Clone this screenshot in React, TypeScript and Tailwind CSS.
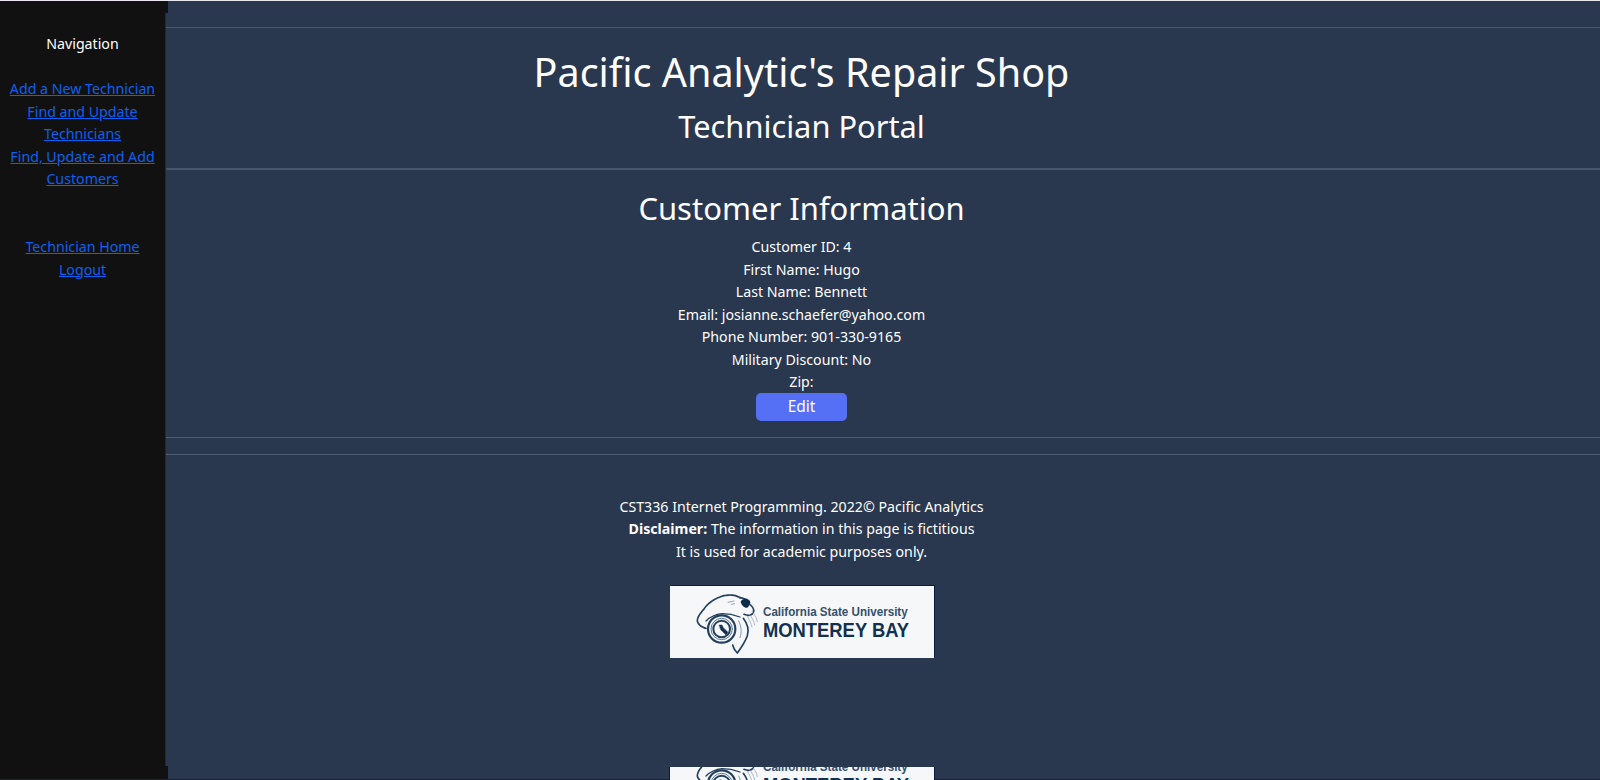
const customerRows = [
  "Customer ID: 4",
  "First Name: Hugo",
  "Last Name: Bennett",
  "Email: josianne.schaefer@yahoo.com",
  "Phone Number: 901-330-9165",
  "Military Discount: No",
  "Zip:",
];

function NavLink({ children }: { children: React.ReactNode }) {
  return (
    <a href="#" className="text-[#0d60f0] underline">
      {children}
    </a>
  );
}

function Otter() {
  return (
    <svg width="70" height="70" viewBox="0 0 210 210" fill="none" className="mt-[3px] shrink-0">
      <g stroke="#23405f" strokeLinecap="round" strokeLinejoin="round">
        {/* head and back */}
        <path
          d="M48 118C34 114 24 106 22 96C22 82 34 70 42 60C52 44 72 30 92 23C112 16 134 16 150 26"
          strokeWidth="5"
          strokeDasharray="9 2"
        />
        <path d="M150 26C158 28 164 30 170 32M182 48C190 56 194 66 188 74C182 80 172 80 162 76" strokeWidth="5" />
        <path d="M48 96C60 84 76 76 96 74C116 74 134 78 150 84" strokeWidth="4" />
        {/* flipper */}
        <path
          d="M160 88C172 104 178 122 172 140C166 158 152 178 142 192C136 186 130 176 128 168"
          strokeWidth="5"
        />
        <path d="M146 96C154 112 156 130 150 146" strokeWidth="2.5" stroke="#6f84a0" />
        {/* seal ring */}
        <circle cx="95" cy="120" r="41" strokeWidth="6.5" />
        <circle cx="95" cy="120" r="32" strokeWidth="3" stroke="#5e7690" />
        <circle cx="95" cy="120" r="25" strokeWidth="6" />
        <path d="M88 108L96 108L100 116L114 130L108 138L92 122Z" fill="#12304f" strokeWidth="1.5" />
        {/* eye and whiskers */}
        <path d="M114 40L132 36M124 46L134 44" strokeWidth="2.5" stroke="#7f93aa" />
        <path
          d="M186 68C194 76 200 86 202 98M178 76C186 86 192 96 194 108M172 82C178 92 184 102 186 114"
          stroke="#9fb0c0"
          strokeWidth="2.5"
        />
      </g>
      <path d="M152 38C156 28 172 26 178 34C184 42 180 50 172 56C164 58 154 48 152 38Z" fill="#0f2b4a" />
    </svg>
  );
}

function Logo() {
  return (
    <div className="flex h-[72px] w-[264px] items-center bg-[#f6f7f8] pl-[20px] shadow-[1px_-1px_0_#0b1846]">
      <Otter />
      <div className="ml-[3px] flex w-[145px] flex-col font-['Liberation_Sans',sans-serif] font-bold">
        <span className="origin-left scale-x-[0.93] text-[12.5px] leading-[15px] whitespace-nowrap text-[#34506f]">
          California State University
        </span>
        <span className="origin-left scale-x-[0.875] text-[21px] leading-[20px] whitespace-nowrap text-[#12304f]">
          MONTEREY BAY
        </span>
      </div>
    </div>
  );
}

export default function App() {
  return (
    <div className="flex h-[780px] flex-col overflow-hidden bg-[#29374f] font-['Noto_Sans',sans-serif] text-[14.2px] leading-[22.5px] text-white">
      <div className="h-px bg-[#e9e6ee]" />
      <div className="relative flex min-h-0 flex-1">
        <aside className="w-[166px] shrink-0 border-r border-[#1f2a3c] bg-[#111111] pt-[32px] text-center">
          <div>Navigation</div>
          <div className="mt-[22.5px] flex flex-col">
            <NavLink>Add a New Technician</NavLink>
            <NavLink>Find and Update Technicians</NavLink>
            <NavLink>Find, Update and Add Customers</NavLink>
          </div>
          <div className="mt-[45.5px] flex flex-col">
            <NavLink>Technician Home</NavLink>
            <NavLink>Logout</NavLink>
          </div>
        </aside>
        <div className="absolute top-0 left-0 h-[12px] w-[168px] bg-[#111111]" />
        <div className="absolute bottom-0 left-0 h-[13px] w-[168px] bg-[#111111]" />

        <main className="min-w-0 flex-1">
          <div className="mt-[26px] border-t border-[#4a5870]" />
          <header className="pr-[163px] text-center">
            <h1 className="pt-[15px] text-[39.5px] leading-[58px] font-normal">Pacific Analytic's Repair Shop</h1>
            <h2 className="pt-[1px] text-[30.8px] leading-[48px]">Technician Portal</h2>
          </header>
          <div className="mt-[18px] border-t-2 border-[#46546c]" />
          <section className="flex flex-col items-center pr-[163px] text-center">
            <h2 className="pt-[15px] text-[31px] leading-[46px]">Customer Information</h2>
            <div className="mt-[5px]">
              {customerRows.map((row) => (
                <div key={row}>{row}</div>
              ))}
            </div>
            <button className="-mt-px h-[28px] w-[91px] rounded-[5px] bg-[#5570f5] text-[15.5px] text-white">
              Edit
            </button>
          </section>
          <div className="mt-[16px] border-t border-[#4f5c74]" />
          <div className="mt-[16px] border-t border-[#4f5c74]" />
          <footer className="flex flex-col items-center pr-[163px] text-center">
            <div className="mt-[41px]">
              <div>CST336 Internet Programming. 2022© Pacific Analytics</div>
              <div>
                <b>Disclaimer:</b> The information in this page is fictitious
              </div>
              <div>It is used for academic purposes only.</div>
            </div>
            <div className="mt-[23px]">
              <Logo />
            </div>
            <div className="mt-[109px] h-[13px] w-[266px] overflow-hidden border-x border-[#0b1846] bg-[#f6f7f8]">
              <div className="-mt-[26px]">
                <Logo />
              </div>
            </div>
          </footer>
        </main>
      </div>
      <div className="h-px bg-[#1a2438]" />
    </div>
  );
}
